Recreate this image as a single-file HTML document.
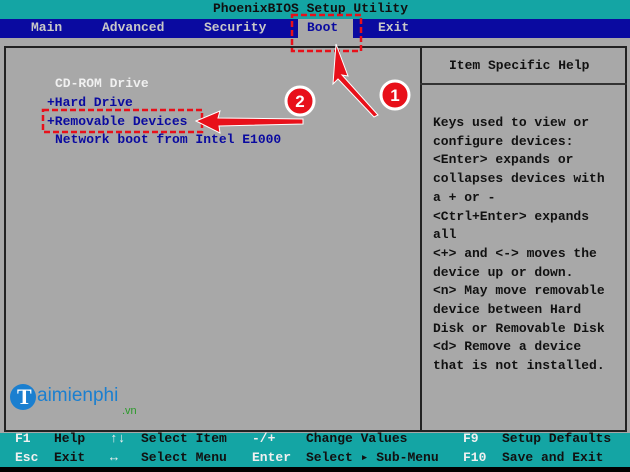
<!DOCTYPE html>
<html><head><meta charset="utf-8"><style>
*{margin:0;padding:0;box-sizing:border-box}
body{width:630px;height:472px;position:relative;overflow:hidden;background:#a8a8a8;font-family:"Liberation Mono",monospace;font-weight:bold;font-size:13px}
.t{position:absolute;white-space:pre;line-height:14px}
</style></head><body>
<div style="position:absolute;left:0;top:0;width:630px;height:19px;background:#14a5a4"></div>
<div class="t" style="left:213px;top:2px;color:#101010">PhoenixBIOS Setup Utility</div>
<div style="position:absolute;left:0;top:19px;width:630px;height:19px;background:#0a0aa0"></div>
<div style="position:absolute;left:298px;top:19px;width:55px;height:19px;background:#a8a8a8"></div>
<div class="t" style="left:31px;top:21px;color:#c8c8c8">Main</div>
<div class="t" style="left:102px;top:21px;color:#c8c8c8">Advanced</div>
<div class="t" style="left:204px;top:21px;color:#c8c8c8">Security</div>
<div class="t" style="left:307px;top:21px;color:#0a0aa0">Boot</div>
<div class="t" style="left:378px;top:21px;color:#c8c8c8">Exit</div>
<div style="position:absolute;left:4px;top:46px;width:623px;height:386px;border:2px solid #222"></div>
<div style="position:absolute;left:420px;top:46px;width:2px;height:386px;background:#222"></div>
<div style="position:absolute;left:420px;top:83px;width:207px;height:2px;background:#333"></div>
<div class="t" style="left:449px;top:59px;color:#111">Item Specific Help</div>
<div class="t" style="left:433px;top:114px;color:#111;line-height:18.7px">Keys used to view or
configure devices:
&lt;Enter&gt; expands or
collapses devices with
a + or -
&lt;Ctrl+Enter&gt; expands
all
&lt;+&gt; and &lt;-&gt; moves the
device up or down.
&lt;n&gt; May move removable
device between Hard
Disk or Removable Disk
&lt;d&gt; Remove a device
that is not installed.</div>
<div class="t" style="left:55px;top:77px;color:#f0f0f0">CD-ROM Drive</div>
<div class="t" style="left:47px;top:96px;color:#0a0aa0">+Hard Drive</div>
<div class="t" style="left:47px;top:115px;color:#0a0aa0">+Removable Devices</div>
<div class="t" style="left:55px;top:133px;color:#0a0aa0">Network boot from Intel E1000</div>
<div style="position:absolute;left:0;top:433px;width:630px;height:34px;background:#14a5a4"></div>
<div style="position:absolute;left:0;top:467px;width:630px;height:5px;background:#000"></div>
<div class="t" style="left:15px;top:432px;color:#f0f0f0">F1</div><div class="t" style="left:54px;top:432px;color:#111">Help</div>
<div class="t" style="left:110px;top:432px;color:#f0f0f0">↑↓</div><div class="t" style="left:141px;top:432px;color:#111">Select Item</div>
<div class="t" style="left:252px;top:432px;color:#f0f0f0">-/+</div><div class="t" style="left:306px;top:432px;color:#111">Change Values</div>
<div class="t" style="left:463px;top:432px;color:#f0f0f0">F9</div><div class="t" style="left:502px;top:432px;color:#111">Setup Defaults</div>
<div class="t" style="left:15px;top:451px;color:#f0f0f0">Esc</div><div class="t" style="left:54px;top:451px;color:#111">Exit</div>
<div class="t" style="left:110px;top:451px;color:#f0f0f0">↔</div><div class="t" style="left:141px;top:451px;color:#111">Select Menu</div>
<div class="t" style="left:252px;top:451px;color:#f0f0f0">Enter</div><div class="t" style="left:306px;top:451px;color:#111">Select ▸ Sub-Menu</div>
<div class="t" style="left:463px;top:451px;color:#f0f0f0">F10</div><div class="t" style="left:502px;top:451px;color:#111">Save and Exit</div>
<div style="position:absolute;left:10px;top:384px;width:26px;height:26px;border-radius:50%;background:#1a7fd0"></div>
<div class="t" style="left:17px;top:385px;color:#fff;font-family:'Liberation Serif',serif;font-size:22px;line-height:24px">T</div>
<div class="t" style="left:37px;top:386px;color:#1a7fd0;font-family:'Liberation Sans',sans-serif;font-weight:normal;font-size:19px;line-height:20px">aimienphi</div>
<div class="t" style="left:122px;top:404px;color:#2a9a2a;font-family:'Liberation Sans',sans-serif;font-weight:normal;font-size:11px">.vn</div>
<svg width="630" height="472" style="position:absolute;left:0;top:0">
<g fill="none" stroke="#e8101a" stroke-width="2.5" stroke-dasharray="6,3">
<rect x="292" y="15" width="69" height="36"/>
<rect x="43" y="110" width="159" height="22"/>
</g>
<polygon points="336,44 348,76 342,75 378,115 374,117 338,79 333,84" fill="#e8101a" stroke="#fff" stroke-width="1"/>
<polygon points="196,121 220,111 218,118 303,119 303,124 219,126 220,133" fill="#e8101a" stroke="#fff" stroke-width="1"/>
<circle cx="395" cy="95" r="14" fill="#e8101a" stroke="#fff" stroke-width="3"/>
<text x="395" y="101" fill="#fff" font-family="Liberation Sans" font-weight="bold" font-size="17" text-anchor="middle">1</text>
<circle cx="300" cy="101" r="14" fill="#e8101a" stroke="#fff" stroke-width="3"/>
<text x="300" y="107" fill="#fff" font-family="Liberation Sans" font-weight="bold" font-size="17" text-anchor="middle">2</text>
</svg>
</body></html>
